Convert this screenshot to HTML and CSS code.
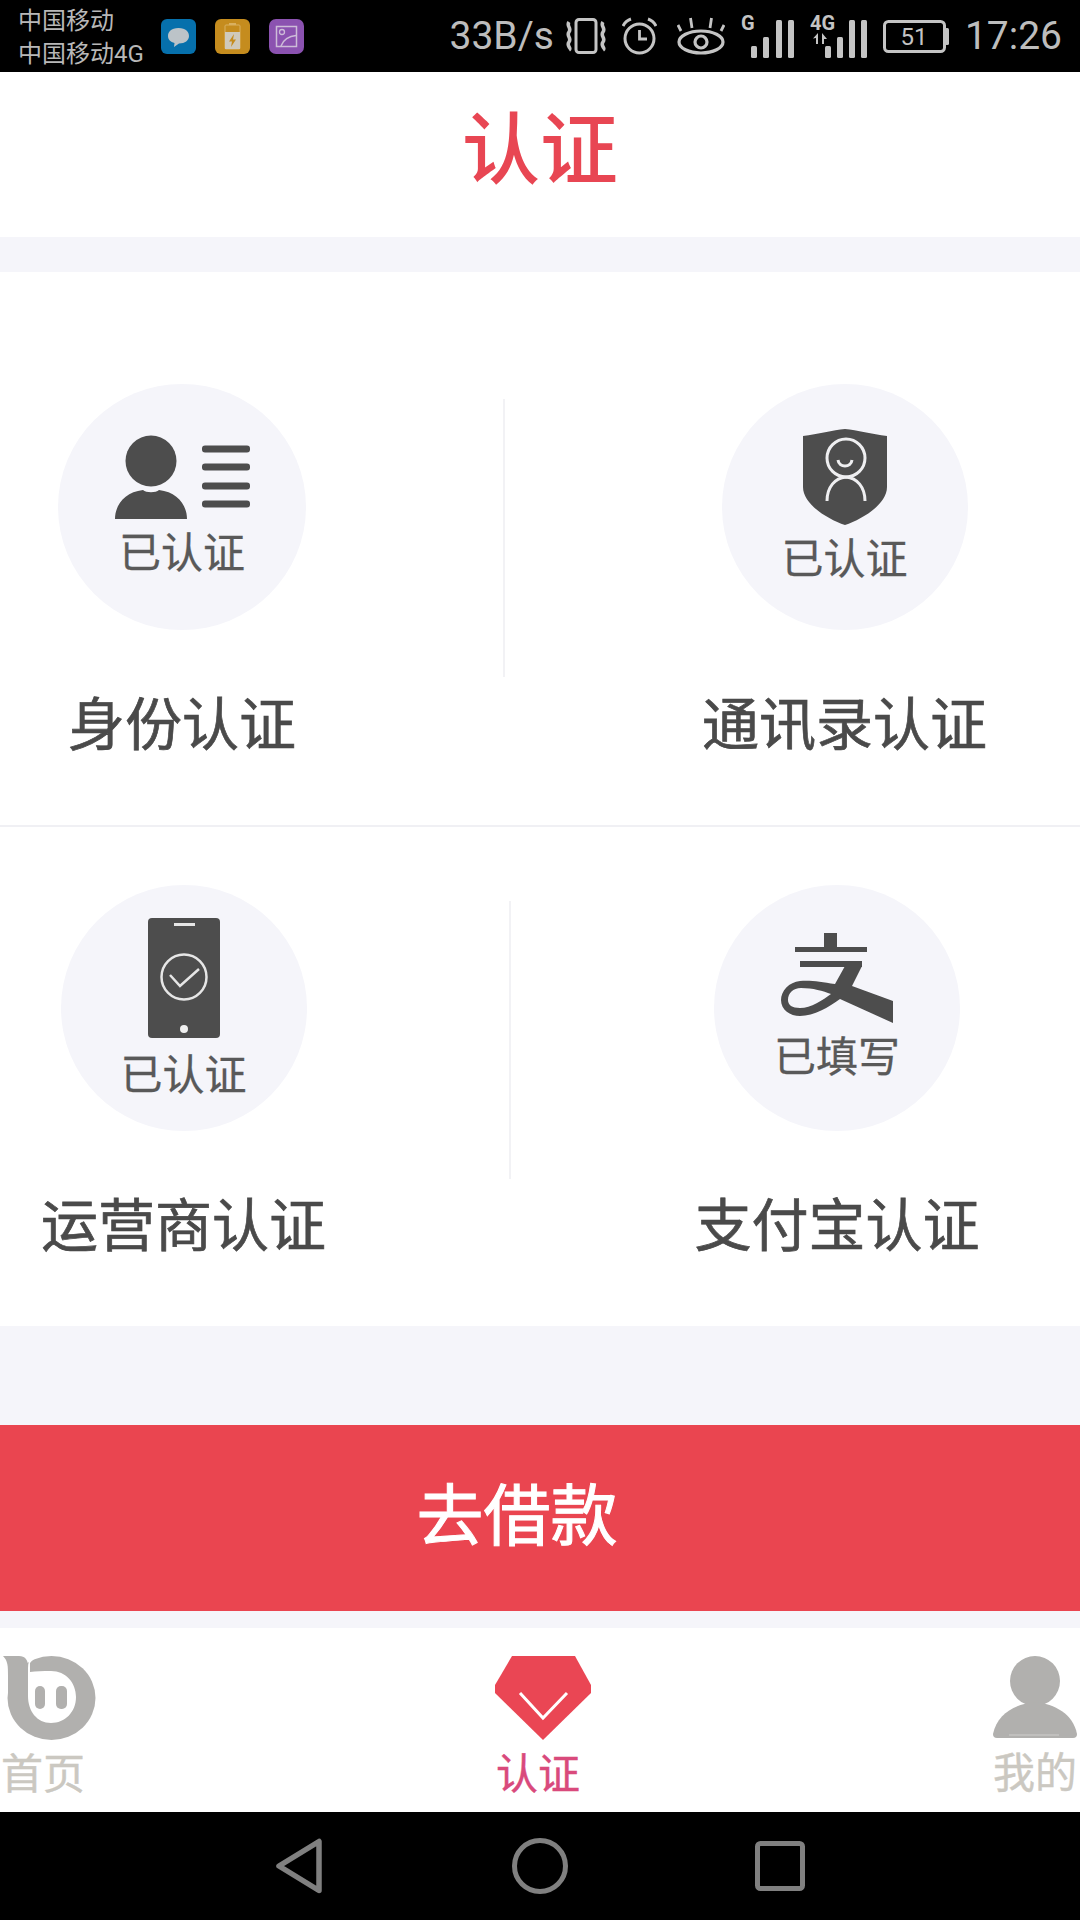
FILE: index.html
```html
<!DOCTYPE html>
<html lang="zh-CN">
<head>
  <meta charset="UTF-8">
  <meta name="viewport" content="width=device-width, initial-scale=1.0">
  <title>认证</title>
  <link rel="stylesheet" href="styles.css">
</head>
<body>
  <!-- status bar -->
  <div class="status-bar">
    <div class="carrier">
      <div>中国移动</div>
      <div>中国移动4G</div>
    </div>
    <div class="app-icons">
      <svg width="35" height="35" viewBox="0 0 35 35">
        <rect width="35" height="35" rx="6" fill="#0670ac"/>
        <path d="M17.5 9C25 9 28 13 28 17C28 21.500 24 24.500 18 24.500L13 28L13.500 24C9.500 23 7 20.500 7 17C7 13 10 9 17.500 9Z" fill="#bcc3c8"/>
      </svg>
      <svg width="35" height="35" viewBox="0 0 35 35">
        <rect width="35" height="35" rx="6" fill="#c58c1e"/>
        <rect x="10" y="6" width="15" height="24" rx="1" fill="none" stroke="#d9b060" stroke-width="1"/>
        <rect x="14" y="4" width="7" height="2" fill="#d9b060"/>
        <rect x="10" y="13" width="15" height="17" fill="#cfc9bb"/>
        <path d="M19 15L14 22.500H17L16 28L21 20.500H18Z" fill="#c58c1e"/>
      </svg>
      <svg width="35" height="35" viewBox="0 0 35 35">
        <rect width="35" height="35" rx="7" fill="#8b52b0"/>
        <rect x="7.500" y="7.500" width="20" height="20" fill="none" stroke="#cdbcd8" stroke-width="1.500"/>
        <circle cx="13" cy="13" r="2.500" fill="none" stroke="#cdbcd8" stroke-width="1.300"/>
        <path d="M12 27C14 21 20 17 27 16.500" fill="none" stroke="#cdbcd8" stroke-width="1.500"/>
      </svg>
    </div>
    <div class="status-right">
      <span class="status-text speed">33B/s</span>
      <svg width="40" height="36" viewBox="0 0 40 36" fill="none" stroke="#c4c4c4">
        <rect x="10" y="1.500" width="20" height="33" rx="3" stroke-width="3"/>
        <path d="M3 4C0 8 6 10 3 14C0 18 6 20 3 24C0 28 6 30 3 32" stroke-width="3.600"/>
        <path d="M37 4C34 8 40 10 37 14C34 18 40 20 37 24C34 28 40 30 37 32" stroke-width="3.600"/>
      </svg>
      <svg class="alarm" width="35" height="38" viewBox="0 0 35 38" fill="none" stroke="#c4c4c4" stroke-width="3">
        <circle cx="17.500" cy="21.500" r="14.500"/>
        <path d="M17.500 13V22H25" stroke-width="2.800"/>
        <path d="M1 9C3 5 6 3 9 2"/>
        <path d="M34 9C32 5 29 3 26 2"/>
      </svg>
      <svg width="48" height="38" viewBox="0 0 48 38" fill="none" stroke="#c4c4c4" stroke-width="3.200">
        <ellipse cx="24" cy="25" rx="22" ry="11"/>
        <circle cx="24" cy="25" r="6"/>
        <path d="M4 14L1 8M15 11L13.500 1M33 11L34.500 1M44 14L47 8" stroke-width="2.800"/>
      </svg>
      <svg width="53" height="56" viewBox="0 -6 53 56">
        <text x="0" y="16" class="signal-type">G</text>
        <g fill="#c4c4c4">
          <rect x="10" y="32" width="6" height="12" rx="1.500"/>
          <rect x="22" y="23" width="6" height="21" rx="1.500"/>
          <rect x="35" y="6" width="6" height="38" rx="1.500"/>
          <rect x="47" y="6" width="6" height="38" rx="1.500"/>
        </g>
      </svg>
      <svg width="57" height="56" viewBox="0 -6 57 56">
        <text x="0" y="16" class="signal-type">4G</text>
        <g fill="#c4c4c4">
          <path d="M8 19V30H6V24L3 24.500ZM12 19L17 25L14 25V30H12Z"/>
          <rect x="15" y="32" width="6" height="12" rx="1.500"/>
          <rect x="27" y="23" width="6" height="21" rx="1.500"/>
          <rect x="39" y="6" width="6" height="38" rx="1.500"/>
          <rect x="51" y="6" width="6" height="38" rx="1.500"/>
        </g>
      </svg>
      <svg width="66" height="33" viewBox="0 0 66 33">
        <rect x="1.500" y="1.500" width="60" height="30" rx="4" fill="none" stroke="#c4c4c4" stroke-width="3"/>
        <rect x="62" y="8" width="4" height="17" rx="1.500" fill="#c4c4c4"/>
        <text x="31" y="25" text-anchor="middle" class="battery-level">51</text>
      </svg>
      <span class="status-text">17:26</span>
    </div>
  </div>

  <header class="page-title">认证</header>

  <div class="cert-card">
    <div class="cert-row cert-row-first">
      <div class="cert-cell cert-cell-a">
        <div class="badge badge-id">
          <svg width="135" height="84" viewBox="0 0 135 84" fill="#4d4d4d">
            <circle cx="36" cy="26" r="25.500"/>
            <path d="M0 84C0 70 10 57 28 55C31 58 41 58 44 55C62 57 72 70 72 84Z"/>
            <rect x="87" y="10.500" width="48" height="7" rx="3"/>
            <rect x="87" y="28.500" width="48" height="7" rx="3"/>
            <rect x="87" y="47.500" width="48" height="7" rx="3"/>
            <rect x="87" y="65.500" width="48" height="7" rx="3"/>
          </svg>
          <span class="badge-text">已认证</span>
        </div>
        <div class="cert-name">身份认证</div>
      </div>
      <div class="cert-line"></div>
      <div class="cert-cell cert-cell-b">
        <div class="badge badge-contacts">
          <svg width="84" height="96" viewBox="0 0 84 96">
            <path d="M0 7C15 5 30 1 42 0C54 1 69 5 84 7V58C84 75 60 90 42 96C24 90 0 75 0 58Z" fill="#4d4d4d"/>
            <g fill="none" stroke="#efeff1" stroke-width="3">
              <circle cx="43" cy="29" r="19"/>
              <path d="M35 31C36 39 48 39 49 31"/>
              <path d="M24 72C24 58 32 49 43 48C54 49 62 58 62 72"/>
            </g>
          </svg>
          <span class="badge-text">已认证</span>
        </div>
        <div class="cert-name">通讯录认证</div>
      </div>
    </div>
    <div class="cert-row cert-row-second">
      <div class="cert-cell cert-cell-a">
        <div class="badge badge-carrier">
          <svg width="72" height="120" viewBox="0 0 72 120">
            <rect width="72" height="120" rx="4" fill="#4d4d4d"/>
            <rect x="26" y="5" width="21" height="3" fill="#e6e6e6"/>
            <circle cx="36" cy="59" r="22.500" fill="none" stroke="#e6e6e6" stroke-width="2.500"/>
            <path d="M22 57L32 68L51 51" fill="none" stroke="#e6e6e6" stroke-width="2.500"/>
            <circle cx="36" cy="111" r="4" fill="#f0f0f0"/>
          </svg>
          <span class="badge-text">已认证</span>
        </div>
        <div class="cert-name">运营商认证</div>
      </div>
      <div class="cert-line"></div>
      <div class="cert-cell cert-cell-b">
        <div class="badge badge-alipay">
          <svg width="112" height="90" viewBox="0 0 112 90" fill="#4d4d4d">
            <rect x="43" y="0" width="13" height="16"/>
            <rect x="14" y="14" width="72" height="5"/>
            <rect x="19" y="28" width="62" height="6"/>
            <path fill-rule="evenodd" d="M112 68L71 53L81 33H64L54 51C40 49 30 47 19 48C8 49 0 58 0 67C0 77 9 83 19 83C33 83 48 74 59 66L112 90ZM50 61C42 67 30 75 19 75C11 75 7 72 7 67C7 60 12 55 20 55C32 55 42 58 50 61Z"/>
          </svg>
          <span class="badge-text">已填写</span>
        </div>
        <div class="cert-name">支付宝认证</div>
      </div>
    </div>
  </div>

  <button class="loan-btn">去借款</button>

  <!-- bottom tabs -->
  <nav class="tab-bar">
    <div class="tab">
      <svg width="93" height="84" viewBox="0 0 93 84">
        <ellipse cx="48.500" cy="42" rx="44" ry="42" fill="#b1b0ae"/>
        <path d="M0 0H16C22 0 25 4 25 10V42H5V20C5 10 5 5 0 0Z" fill="#b1b0ae"/>
        <path d="M25 40V12C25 7 26 4 29 0H33L27 7V16C33 15 40 15 48 15C63 15 73 27 73 41C73 56 62 67 48 67C34 67 25 55 25 40Z" fill="#fff"/>
        <rect x="32" y="30" width="10" height="23" rx="5" fill="#b1b0ae"/>
        <rect x="53" y="30" width="11" height="23" rx="5" fill="#b1b0ae"/>
      </svg>
      <span class="tab-text">首页</span>
    </div>
    <div class="tab tab-active">
      <svg width="96" height="84" viewBox="0 0 96 84">
        <path d="M17 0H80L96 29V37L48 84L0 37V29Z" fill="#ea4654"/>
        <path d="M25 37L48 62L72 37" fill="none" stroke="#fff" stroke-width="3"/>
      </svg>
      <span class="tab-text">认证</span>
    </div>
    <div class="tab tab-mine">
      <svg width="84" height="83" viewBox="0 0 84 83">
        <circle cx="42" cy="25" r="25" fill="#b1b0ae"/>
        <path d="M0 78C4 58 22 48 42 46C62 48 80 58 84 78Q84 82 80 82H4Q0 82 0 78Z" fill="#b1b0ae"/>
        <path d="M16 79H66" stroke="#cfcecc" stroke-width="1"/>
      </svg>
      <span class="tab-text">我的</span>
    </div>
  </nav>

  <!-- system buttons -->
  <div class="nav-bar">
    <svg width="50" height="56" viewBox="0 0 50 56">
      <path d="M44 3.500V52.500L4 28Z" fill="none" stroke="#808080" stroke-width="5.500" stroke-linejoin="round"/>
    </svg>
    <svg width="56" height="56" viewBox="0 0 56 56">
      <circle cx="28" cy="28" r="25.500" fill="none" stroke="#808080" stroke-width="5"/>
    </svg>
    <svg width="50" height="50" viewBox="0 0 50 50">
      <rect x="2.500" y="2.500" width="45" height="45" rx="3" fill="none" stroke="#808080" stroke-width="5"/>
    </svg>
  </div>
</body>
</html>
```

FILE: styles.css
```css
* {
  box-sizing: border-box;
}
body {
  margin: 0;
  width: 1080px;
  height: 1920px;
  overflow: hidden;
  background-color: #f5f5fa;
  font-family: Roboto, "Noto Sans CJK SC", sans-serif;
}
.status-bar {
  display: flex;
  align-items: center;
  height: 72px;
  padding: 0 18px 0 18px;
  background-color: #000;
  color: #b8b8b8;
}
.carrier {
  width: 143px;
  padding-top: 3px;
  font-size: 24px;
  line-height: 33px;
}
.app-icons {
  display: flex;
  gap: 19px;
}
.app-icons svg {
  display: block;
}
.status-right {
  display: flex;
  align-items: center;
  gap: 16px;
  margin-left: auto;
}
.status-text {
  font-size: 39px;
  color: #bdbdbd;
}
.speed {
  margin-right: -4px;
}
.alarm {
  margin-right: 4px;
}
.signal-type {
  font-family: Roboto, sans-serif;
  font-size: 20px;
  font-weight: 700;
  fill: #c4c4c4;
}
.battery-level {
  font-family: Roboto, sans-serif;
  font-size: 24px;
  fill: #c4c4c4;
}
.page-title {
  height: 165px;
  background-color: #fff;
  color: #e84653;
  font-size: 78px;
  font-weight: 500;
  line-height: 160px;
  text-align: center;
}
.cert-card {
  margin-top: 35px;
  background-color: #fff;
}
.cert-row {
  display: grid;
  align-items: start;
}
.cert-row-first {
  grid-template-columns: 503px 2px 1fr;
  height: 555px;
  padding-top: 112px;
  border-bottom: 2px solid #f0f0f4;
}
.cert-row-second {
  grid-template-columns: 509px 2px 1fr;
  height: 499px;
  padding-top: 58px;
}
.cert-cell {
  display: flex;
  flex-direction: column;
  align-items: center;
}
.cert-row-first .cert-cell-a {
  padding-right: 139px;
}
.cert-row-first .cert-cell-b {
  padding-left: 104px;
}
.cert-row-second .cert-cell-a {
  padding-right: 142px;
}
.cert-row-second .cert-cell-b {
  padding-left: 83px;
}
.cert-line {
  height: 278px;
  margin-top: 15px;
  background-color: #f2f2f5;
}
.cert-row-second .cert-line {
  margin-top: 16px;
}
.badge {
  display: flex;
  flex-direction: column;
  align-items: center;
  width: 246px;
  height: 246px;
  border-radius: 50%;
  background-color: #f5f5fa;
}
.badge svg {
  display: block;
}
.badge-text {
  font-size: 42px;
  line-height: 40px;
  color: #595959;
  -webkit-text-stroke: 0.3px #595959;
}
.badge-id {
  width: 248px;
  padding-top: 51px;
  gap: 15px;
}
.badge-contacts {
  padding-top: 45px;
  gap: 15px;
}
.badge-carrier {
  padding-top: 33px;
  gap: 18px;
}
.badge-alipay {
  padding-top: 48px;
  gap: 15px;
}
.cert-name {
  margin-top: 64px;
  font-size: 57px;
  line-height: 64px;
  color: #4a4a4a;
  -webkit-text-stroke: 0.7px #4a4a4a;
  white-space: nowrap;
}
.loan-btn {
  display: block;
  width: 100%;
  height: 186px;
  margin-top: 99px;
  padding: 0 46px 15px 0;
  border: none;
  background-color: #ea4550;
  color: #fff;
  font-family: inherit;
  font-size: 67px;
  -webkit-text-stroke: 1px #fff;
}
.tab-bar {
  display: grid;
  grid-template-columns: 492px 498px 1fr;
  height: 184px;
  margin-top: 17px;
  padding: 28px 3px 0;
  background-color: #fff;
}
.tab {
  display: flex;
  flex-direction: column;
  align-items: flex-start;
}
.tab svg {
  display: block;
}
.tab-text {
  margin-top: 15px;
  margin-left: -2px;
  font-size: 42px;
  line-height: 40px;
  color: #cbc8c1;
  -webkit-text-stroke: 0.4px #cbc8c1;
}
.tab-active .tab-text {
  margin-left: 1px;
  color: #d94a7c;
  -webkit-text-stroke: 0.4px #d94a7c;
}
.tab-mine .tab-text {
  margin-left: 0;
}
.nav-bar {
  display: grid;
  grid-template-columns: repeat(3, 240px);
  justify-content: center;
  justify-items: center;
  align-items: center;
  height: 108px;
  background-color: #000;
}
```
